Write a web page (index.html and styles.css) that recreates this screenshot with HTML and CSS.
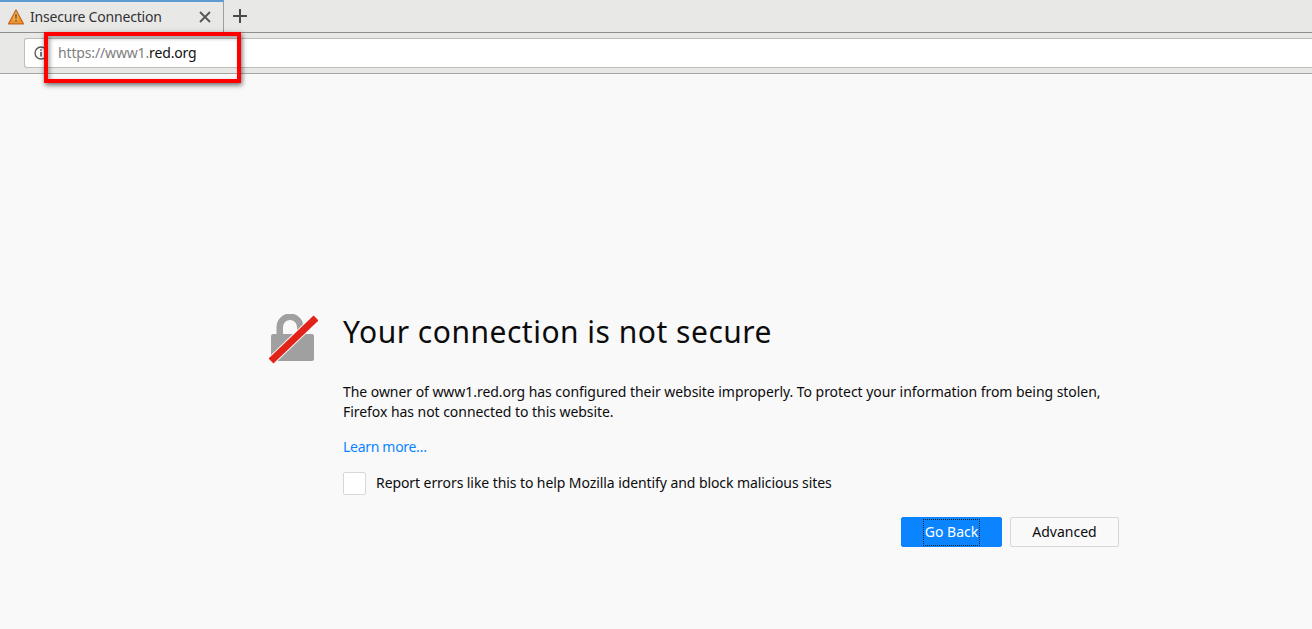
FILE: index.html
```html
<!DOCTYPE html>
<html lang="en">
<head>
<meta charset="utf-8">
<title>Insecure Connection</title>
<link rel="stylesheet" href="styles.css">
</head>
<body>
<header class="chrome">
  <div class="tabbar">
    <div class="tab">
      <svg class="tab-warn" width="16" height="16" viewBox="0 0 16 16"><defs><linearGradient id="warn" x1="0" y1="0" x2="0" y2="1"><stop offset="0" stop-color="#fbc04a"/><stop offset="1" stop-color="#f08a1d"/></linearGradient></defs><path d="M8 1 15.400 14.800H.6Z" fill="url(#warn)" stroke="#c4651c" stroke-width="1.300" stroke-linejoin="round"/><path d="M6.900 5h2.200l-.4 5.400H7.300ZM6.900 11.100h2.200v2H6.900Z" fill="#6b3a0c" stroke="#fde3b0" stroke-width=".4"/></svg>
      <span class="tab-title">Insecure Connection</span>
      <svg class="tab-close" width="12" height="12" viewBox="0 0 12 12"><path d="M1 1 11 11M11 1 1 11" stroke="#555" stroke-width="1.800"/></svg>
    </div>
    <svg class="newtab" width="14" height="14" viewBox="0 0 14 14"><path d="M7 0V14M0 7H14" stroke="#4a4a4a" stroke-width="2"/></svg>
  </div>
  <div class="navbar">
    <div class="urlbar">
      <svg class="info" width="14" height="14" viewBox="0 0 14 14"><circle cx="7" cy="7" r="6" fill="none" stroke="#555" stroke-width="1.300"/><path d="M6.200 6h1.600v4.600H6.200ZM6.200 3.200h1.600v1.600H6.200Z" fill="#555"/></svg>
      <span class="url"><span class="url-dim">https://www1.</span>red.org</span>
    </div>
  </div>
</header>
<div class="redbox"></div>
<main class="page">
  <div class="error">
    <svg class="lock" width="50" height="50" viewBox="0 0 50 50"><path d="M5 23a2 2 0 0 1 2-2h3.500v-7a13.500 13.500 0 0 1 27 0v7H46a2 2 0 0 1 2 2v23a2 2 0 0 1-2 2H7a2 2 0 0 1-2-2ZM17 21h14v-7a7 7 0 0 0-14 0Z" fill="#a0a0a0" transform="translate(-2 -1)"/><path d="M3 47 48 4" stroke="#fafafa" stroke-width="9"/><path d="M3 47 48 4" stroke="#e2231a" stroke-width="7"/></svg>
    <div class="content">
      <h1 class="title">Your connection is not secure</h1>
      <p class="desc">The owner of www1.red.org has configured their website improperly. To protect your information from being stolen, Firefox has not connected to this website.</p>
      <a class="learn">Learn more…</a>
      <label class="report"><span class="check"></span><span class="report-text">Report errors like this to help Mozilla identify and block malicious sites</span></label>
      <div class="buttons">
        <button class="btn primary"><span class="focus">Go Back</span></button>
        <button class="btn">Advanced</button>
      </div>
    </div>
  </div>
</main>
</body>
</html>
```
FILE: styles.css
```css
* { box-sizing: border-box; }
html, body { margin: 0; height: 100%; }
body { width: 1312px; height: 629px; overflow: hidden; font-family: "Noto Sans", sans-serif; background: #f9f9fa; position: relative; display: flex; flex-direction: column; }
.chrome { background: #e8e8e7; height: 74px; border-bottom: 1px solid #a5a5a3; flex: none; }
.tabbar { height: 33px; display: flex; align-items: center; border-bottom: 1px solid #8f8f8d; }
.tab { width: 224px; height: 32px; display: flex; align-items: center; padding: 0 12px 0 8px; border-top: 2px solid #5c9ad2; border-right: 1px solid #a09f9d; }
.tab-warn { flex: none; }
.tab-title { margin-left: 6px; font-size: 14px; letter-spacing: -0.2px; color: #333; flex: 1; white-space: nowrap; position: relative; top: -1px; }
.newtab { margin-left: 9px; }
.navbar { height: 40px; padding: 5px 0 5px 24px; }
.urlbar { height: 30px; background: #fff; border: 1px solid #bdbdbb; border-right: 0; border-radius: 3px 0 0 3px; display: flex; align-items: center; padding-left: 9px; }
.url { margin-left: 10px; font-size: 14px; letter-spacing: -0.15px; color: #111; position: relative; top: -1px; }
.url-dim { color: #808080; }
.redbox { position: absolute; left: 44px; top: 32px; width: 197px; height: 51px; border: 4px solid #f00; box-shadow: 1px 2px 5px rgba(0,0,0,.6), inset 2px 2px 4px rgba(0,0,0,.35); }
.page { flex: 1; padding: 240px 0 0 268px; }
.error { display: flex; align-items: flex-start; }
.lock { flex: none; margin-right: 25px; }
.content { width: 776px; font-size: 14px; color: #0c0c0d; letter-spacing: -0.05px; }
.title { margin: -1px 0 0; font-size: 30px; font-weight: 400; line-height: 38px; letter-spacing: 0.5px; }
.desc { margin: 31px 0 0; line-height: 20px; }
.learn { display: block; margin-top: 15px; line-height: 20px; color: #0a84ff; letter-spacing: -0.3px; }
.report { display: flex; align-items: center; margin-top: 15px; height: 23px; letter-spacing: -0.08px; }
.report-text { padding-bottom: 2px; }
.check { width: 23px; height: 23px; background: #fff; border: 1px solid #d7d7db; border-radius: 2px; margin-right: 10px; }
.buttons { display: flex; justify-content: flex-end; gap: 8px; margin-top: 22px; }
.btn { height: 30px; font: 14px "Noto Sans", sans-serif; border: 1px solid #d7d7db; background: #f9f9fa; color: #0c0c0d; border-radius: 2px; width: 109px; padding: 0 0 2px; }
.primary { width: 101px; background: #0a84ff; border-color: #0a84ff; color: #fff; padding: 0; }
.focus { display: inline-block; width: 57px; height: 27px; line-height: 25px; outline: 1px dotted #222; outline-offset: -1px; white-space: nowrap; }
```
